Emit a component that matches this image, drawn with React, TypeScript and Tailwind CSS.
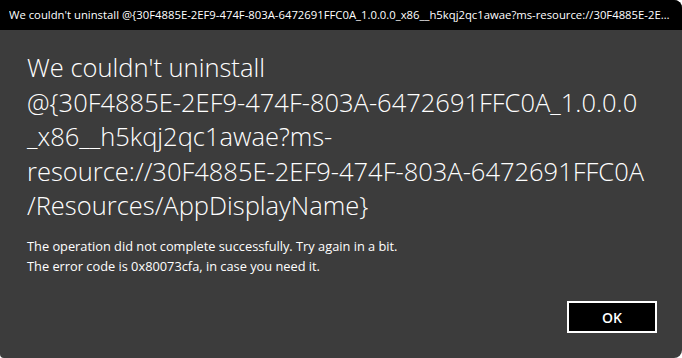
const TITLE =
  "We couldn't uninstall @{30F4885E-2EF9-474F-803A-6472691FFC0A_1.0.0.0_x86__h5kqj2qc1awae?ms-resource://30F4885E-2EF9-474F-803A-6472691FFC0A/Resources/AppDisplayName}";

// the heading wraps at fixed points in the original dialog
const HEADING_LINES = [
  "We couldn't uninstall",
  '@{30F4885E-2EF9-474F-803A-6472691FFC0A_1.0.0.0',
  '_x86__h5kqj2qc1awae?ms-',
  'resource://30F4885E-2EF9-474F-803A-6472691FFC0A',
  '/Resources/AppDisplayName}',
];

export default function App() {
  return (
    <div className="h-[358px] w-[682px] overflow-hidden bg-white font-['Open_Sans','Noto_Sans',sans-serif] text-white">
      <div className="flex h-full w-full flex-col overflow-hidden rounded-tr-[8px] rounded-br-[8px] rounded-bl-[4px] bg-[#3c3c3c]">
        {/* title bar */}
        <div className="flex h-[30px] shrink-0 items-center bg-black pl-[9px] pr-[8px]">
          <span className="truncate text-[11.3px] leading-[16px]">{TITLE}</span>
        </div>

        {/* message */}
        <div className="flex flex-1 flex-col pl-[27px] pr-[10px]">
          <div className="mt-[20px] text-[25.5px] font-light leading-[34.5px] whitespace-nowrap">
            {HEADING_LINES.map((line) => (
              <div key={line}>{line}</div>
            ))}
          </div>
          <div className="mt-[13px] text-[12.8px] leading-[20px]">
            <div>The operation did not complete successfully. Try again in a bit.</div>
            <div>The error code is 0x80073cfa, in case you need it.</div>
          </div>

          <div className="mt-auto flex justify-end pb-[25px] pr-[15px]">
            <button
              type="button"
              className="flex h-[32px] w-[90px] items-center justify-center border-2 border-white bg-black text-[14px] font-semibold"
            >
              OK
            </button>
          </div>
        </div>
      </div>
    </div>
  );
}
